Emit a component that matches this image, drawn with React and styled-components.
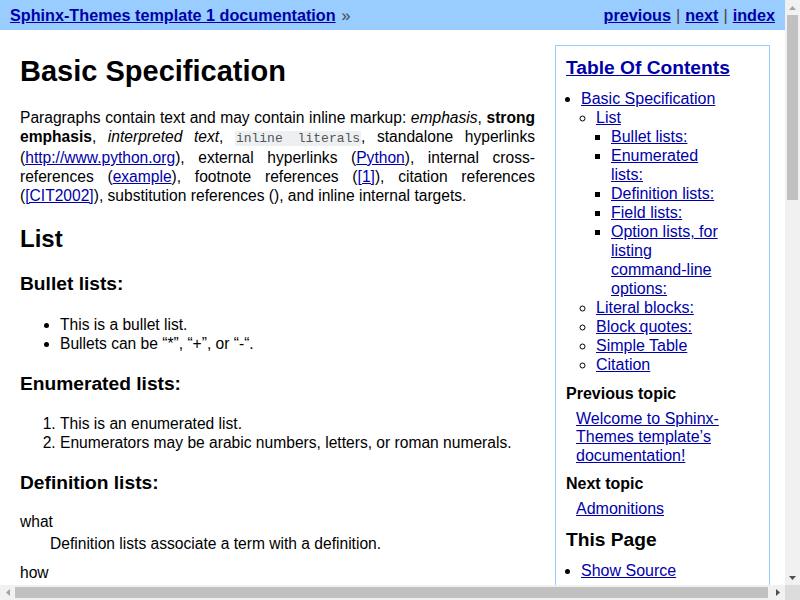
import React from "react";
import styled, { createGlobalStyle } from "styled-components";

const GlobalStyle = createGlobalStyle`
  html, body {
    margin: 0;
    padding: 0;
    overflow: hidden;
  }
  body {
    font-family: "Liberation Sans", Arial, sans-serif;
    font-size: 15.6px;
    line-height: 19px;
    color: #000;
    background: #fff;
  }
`;

/* window frame: page area plus the browser's scrollbars */
const Screen = styled.div`
  height: 100vh;
  display: grid;
  grid-template-columns: 1fr 15px;
  grid-template-rows: 1fr 15px;
`;

const Viewport = styled.div`
  min-width: 0;
  min-height: 0;
  overflow: hidden;
`;

const ScrollBar = styled.div`
  display: flex;
  flex-direction: ${(props) => (props.vertical ? "column" : "row")};
  background-color: #f1f1f1;
`;

const ScrollButton = styled.div`
  flex: 0 0 15px;
  display: flex;
  align-items: center;
  justify-content: center;
`;

const ScrollTrack = styled.div`
  flex: 1;
  display: flex;
  flex-direction: ${(props) => (props.vertical ? "column" : "row")};
  padding: ${(props) => (props.vertical ? "0 2px" : "2px 0")};
`;

const ScrollThumb = styled.div`
  flex: 0 0 ${(props) => props.size}px;
  background-color: #c1c1c1;
`;

const ScrollCorner = styled.div`
  background-color: #dcdcdc;
`;

const Arrow = ({ dir, color }) => {
  const pts = {
    up: "0,4 7,4 3.5,0",
    down: "0,0 7,0 3.5,4",
    left: "4,0 4,7 0,3.5",
    right: "0,0 0,7 4,3.5",
  }[dir];
  const vertical = dir === "up" || dir === "down";
  return (
    <svg width={vertical ? 7 : 4} height={vertical ? 4 : 7} viewBox={vertical ? "0 0 7 4" : "0 0 4 7"}>
      <polygon points={pts} fill={color} />
    </svg>
  );
};

const RelBar = styled.div`
  height: 30px;
  padding: 0 10px;
  display: flex;
  align-items: center;
  justify-content: space-between;
  background-color: #99ccff;
  font-size: 16.2px;
  font-weight: bold;
`;

const RelLink = styled.a`
  color: #0000aa;
  text-decoration: underline;
  font-weight: bold;
`;

const RelSep = styled.span`
  color: #444;
  font-weight: normal;
  margin: 0 ${(props) => props.gap || 5}px;
`;

const Layout = styled.div`
  width: 788px;
  box-sizing: border-box;
  padding: 0 18px 40px 20px;
  display: flex;
  align-items: flex-start;
`;

const Main = styled.div`
  flex: 1;
  min-width: 0;
`;

const Title = styled.h1`
  font-size: 29px;
  line-height: normal;
  margin: 25px 0 20px;
`;

const SectionTitle = styled.h2`
  font-size: 24px;
  line-height: normal;
  margin: 20px 0;
`;

const SubTitle = styled.h3`
  font-size: 19.2px;
  line-height: normal;
  margin: 20px 0;
`;

const Para = styled.p`
  margin: 20px 0;
  text-align: justify;
`;

const Link = styled.a`
  color: #0000aa;
  text-decoration: underline;
`;

const Literal = styled.code`
  font-family: "Liberation Mono", "DejaVu Sans Mono", monospace;
  font-size: 13px;
  color: #555;
  background-color: #ecf0f3;
  padding: 0 1px;
`;

const List = styled.ul`
  margin: 20px 0;
  padding-left: 40px;
`;

/* negative top margins pull the list a pixel closer to the heading above */
const NumList = styled.ol`
  margin: -1px 0 20px;
  padding-left: 40px;
`;

const DefList = styled.dl`
  margin: -2px 0 20px;
`;

const Term = styled.dt`
  margin: 0;
`;

const Def = styled.dd`
  margin: 3px 0 10px 30px;
`;

const FieldTable = styled.table`
  margin: 20px 0;
  border-collapse: collapse;
  th, td {
    padding: 2px 10px 2px 0;
    vertical-align: top;
    text-align: left;
  }
  th {
    font-weight: bold;
    white-space: nowrap;
  }
`;

const OptionTable = styled.table`
  margin: 20px 0;
  border-collapse: collapse;
  td {
    padding: 2px 20px 2px 0;
    vertical-align: top;
  }
`;

const Opt = styled.kbd`
  font-family: "Liberation Mono", "DejaVu Sans Mono", monospace;
  font-size: 14px;
  white-space: nowrap;
`;

const Pre = styled.pre`
  margin: 20px 0;
  padding: 10px;
  font-family: "Liberation Mono", "DejaVu Sans Mono", monospace;
  font-size: 13px;
  line-height: 17px;
  background-color: #ecf0f3;
  color: #222;
  border: 1px solid #c8d4dc;
`;

const Quote = styled.blockquote`
  margin: 20px 0 20px 30px;
  p {
    margin: 0 0 8px;
  }
`;

const Attribution = styled.p`
  margin: 0;
  padding-left: 30px;
`;

const GridTable = styled.table`
  margin: 20px 0;
  border-collapse: collapse;
  th, td {
    border: 1px solid #aaa;
    padding: 2px 10px;
    text-align: left;
  }
  th {
    background-color: #eef4fa;
  }
`;

const NoteTable = styled.table`
  margin: 20px 0;
  border-collapse: collapse;
  border-left: 1px solid #aaa;
  td {
    padding: 2px 8px;
    vertical-align: top;
  }
`;

const Sidebar = styled.div`
  flex: 0 0 215px;
  box-sizing: border-box;
  margin: 15px 0 0 20px;
  padding: 10px 35px 20px 10px;
  border: 1px solid #99ccff;
  font-size: 16px;
`;

const SideTitle = styled.h3`
  font-size: 19.2px;
  line-height: normal;
  margin: ${(props) => (props.first ? "1px" : "11px")} 0 10px;
`;

const SideHeading = styled.h4`
  font-size: 16px;
  line-height: normal;
  margin: 10px 0 6.5px;
`;

const SideList = styled.ul`
  margin: ${(props) => (props.nested ? "0" : "10px 13px 11px 0")};
  padding-left: 15px;
  list-style-type: ${(props) => props.bullet || "disc"};
`;

const SidePara = styled.p`
  margin: 0 13px 0 10px;
  line-height: 18.5px;
`;

const SearchRow = styled.form`
  display: flex;
  gap: 4px;
  margin: 0 0 6px;
`;

const SearchInput = styled.input`
  width: 110px;
  font-size: 13px;
`;

const SearchNote = styled.p`
  margin: 0;
  font-size: 13px;
  line-height: 16px;
`;

const toc = [
  {
    label: "Basic Specification",
    children: [
      {
        label: "List",
        children: [
          "Bullet lists:",
          "Enumerated lists:",
          "Definition lists:",
          "Field lists:",
          "Option lists, for listing command-line options:",
        ],
      },
      { label: "Literal blocks:" },
      { label: "Block quotes:" },
      { label: "Simple Table" },
      { label: "Citation" },
    ],
  },
];

const options = [
  ["-a", "command-line option “a”"],
  ["-b file", "options can have arguments and long descriptions"],
  ["--long", "options can be long also"],
  ["--input=file", "long options can also have arguments"],
  ["/V", "DOS/VMS-style options too"],
];

const truth = [
  ["False", "False", "False"],
  ["True", "False", "True"],
  ["False", "True", "True"],
  ["True", "True", "True"],
];

const Page = () => (
  <>
    <RelBar>
      <div>
        <RelLink href="#">Sphinx-Themes template 1 documentation</RelLink>
        <RelSep gap={6}>»</RelSep>
      </div>
      <div>
        <RelLink href="#">previous</RelLink>
        <RelSep>|</RelSep>
        <RelLink href="#">next</RelLink>
        <RelSep>|</RelSep>
        <RelLink href="#">index</RelLink>
      </div>
    </RelBar>
    <Layout>
      <Main>
        <Title>Basic Specification</Title>
        <Para>
          Paragraphs contain text and may contain inline markup: <em>emphasis</em>,{" "}
          <strong>strong emphasis</strong>, <cite>interpreted text</cite>,{" "}
          <Literal>inline literals</Literal>, standalone hyperlinks (
          <Link href="#">http://www.python.org</Link>), external hyperlinks (
          <Link href="#">Python</Link>), internal cross-references (
          <Link href="#">example</Link>), footnote references (<Link href="#">[1]</Link>),
          citation references (<Link href="#">[CIT2002]</Link>), substitution references (),
          and inline internal targets.
        </Para>

        <SectionTitle>List</SectionTitle>
        <SubTitle>Bullet lists:</SubTitle>
        <List>
          <li>This is a bullet list.</li>
          <li>Bullets can be “*”, “+”, or “-“.</li>
        </List>

        <SubTitle>Enumerated lists:</SubTitle>
        <NumList>
          <li>This is an enumerated list.</li>
          <li>Enumerators may be arabic numbers, letters, or roman numerals.</li>
        </NumList>

        <SubTitle>Definition lists:</SubTitle>
        <DefList>
          <Term>what</Term>
          <Def>Definition lists associate a term with a definition.</Def>
          <Term>how</Term>
          <Def>
            The term is a one-line phrase, and the definition is one or more paragraphs
            or body elements, indented relative to the term. Blank lines are not allowed
            between term and definition.
          </Def>
        </DefList>

        <SubTitle>Field lists:</SubTitle>
        <FieldTable>
          <tbody>
            <tr>
              <th>Authors:</th>
              <td>
                Tony J. (Tibs) Ibbs, David Goodger
                <br />
                (and sundry other good-natured folks)
              </td>
            </tr>
            <tr>
              <th>Version:</th>
              <td>1.0 of 2001/08/08</td>
            </tr>
            <tr>
              <th>Dedication:</th>
              <td>To my father.</td>
            </tr>
          </tbody>
        </FieldTable>

        <SubTitle>Option lists, for listing command-line options:</SubTitle>
        <OptionTable>
          <tbody>
            {options.map(([opt, desc]) => (
              <tr key={opt}>
                <td>
                  <Opt>{opt}</Opt>
                </td>
                <td>{desc}</td>
              </tr>
            ))}
          </tbody>
        </OptionTable>

        <SectionTitle>Literal blocks:</SectionTitle>
        <Para>
          Literal blocks are indicated with a double-colon (“::”) at the end of the
          preceding paragraph (over there <code>--&gt;</code>). They can be indented:
        </Para>
        <Pre>{`if literal_block:
    text = 'is left as-is'
    spaces_and_linebreaks = 'are preserved'
    markup_processing = None`}</Pre>

        <SectionTitle>Block quotes:</SectionTitle>
        <Para>Block quotes consist of indented body elements:</Para>
        <Quote>
          <p>This theory, that is mine, is mine.</p>
          <Attribution>—Anne Elk (Miss)</Attribution>
        </Quote>

        <SectionTitle>Simple Table</SectionTitle>
        <GridTable>
          <thead>
            <tr>
              <th colSpan={2}>Inputs</th>
              <th>Output</th>
            </tr>
            <tr>
              <th>A</th>
              <th>B</th>
              <th>A or B</th>
            </tr>
          </thead>
          <tbody>
            {truth.map((row, i) => (
              <tr key={i}>
                {row.map((cell, j) => (
                  <td key={j}>{cell}</td>
                ))}
              </tr>
            ))}
          </tbody>
        </GridTable>

        <SectionTitle>Citation</SectionTitle>
        <NoteTable>
          <tbody>
            <tr>
              <td>[CIT2002]</td>
              <td>
                Citations are text-labeled footnotes. They may be rendered separately
                and differently from footnotes.
              </td>
            </tr>
          </tbody>
        </NoteTable>
        <NoteTable>
          <tbody>
            <tr>
              <td>[1]</td>
              <td>
                A footnote contains body elements, consistently indented by at least 3
                spaces.
              </td>
            </tr>
          </tbody>
        </NoteTable>
      </Main>

      <Sidebar>
        <SideTitle first>
          <Link href="#">Table Of Contents</Link>
        </SideTitle>
        <SideList>
          {toc.map((top) => (
            <li key={top.label}>
              <Link href="#">{top.label}</Link>
              <SideList nested bullet="circle">
                {top.children.map((mid) => (
                  <li key={mid.label}>
                    <Link href="#">{mid.label}</Link>
                    {mid.children && (
                      <SideList nested bullet="square">
                        {mid.children.map((leaf) => (
                          <li key={leaf}>
                            <Link href="#">{leaf}</Link>
                          </li>
                        ))}
                      </SideList>
                    )}
                  </li>
                ))}
              </SideList>
            </li>
          ))}
        </SideList>

        <SideHeading>Previous topic</SideHeading>
        <SidePara>
          <Link href="#">Welcome to Sphinx-Themes template’s documentation!</Link>
        </SidePara>
        <SideHeading>Next topic</SideHeading>
        <SidePara>
          <Link href="#">Admonitions</Link>
        </SidePara>

        <SideTitle>This Page</SideTitle>
        <SideList>
          <li>
            <Link href="#">Show Source</Link>
          </li>
        </SideList>

        <SideTitle>Quick search</SideTitle>
        <SearchRow onSubmit={(e) => e.preventDefault()}>
          <SearchInput type="text" />
          <button type="submit">Go</button>
        </SearchRow>
        <SearchNote>Enter search terms or a module, class or function name.</SearchNote>
      </Sidebar>
    </Layout>
  </>
);

const App = () => {
  return (
    <>
      <GlobalStyle />
      <Screen>
        <Viewport>
          <Page />
        </Viewport>
        <ScrollBar vertical>
          <ScrollButton>
            <Arrow dir="up" color="#a3a3a3" />
          </ScrollButton>
          <ScrollTrack vertical>
            <ScrollThumb size={185} />
          </ScrollTrack>
          <ScrollButton>
            <Arrow dir="down" color="#505050" />
          </ScrollButton>
        </ScrollBar>
        <ScrollBar>
          <ScrollButton>
            <Arrow dir="left" color="#a3a3a3" />
          </ScrollButton>
          <ScrollTrack>
            <ScrollThumb size={753} />
          </ScrollTrack>
          <ScrollButton>
            <Arrow dir="right" color="#505050" />
          </ScrollButton>
        </ScrollBar>
        <ScrollCorner />
      </Screen>
    </>
  );
};

export default App;
